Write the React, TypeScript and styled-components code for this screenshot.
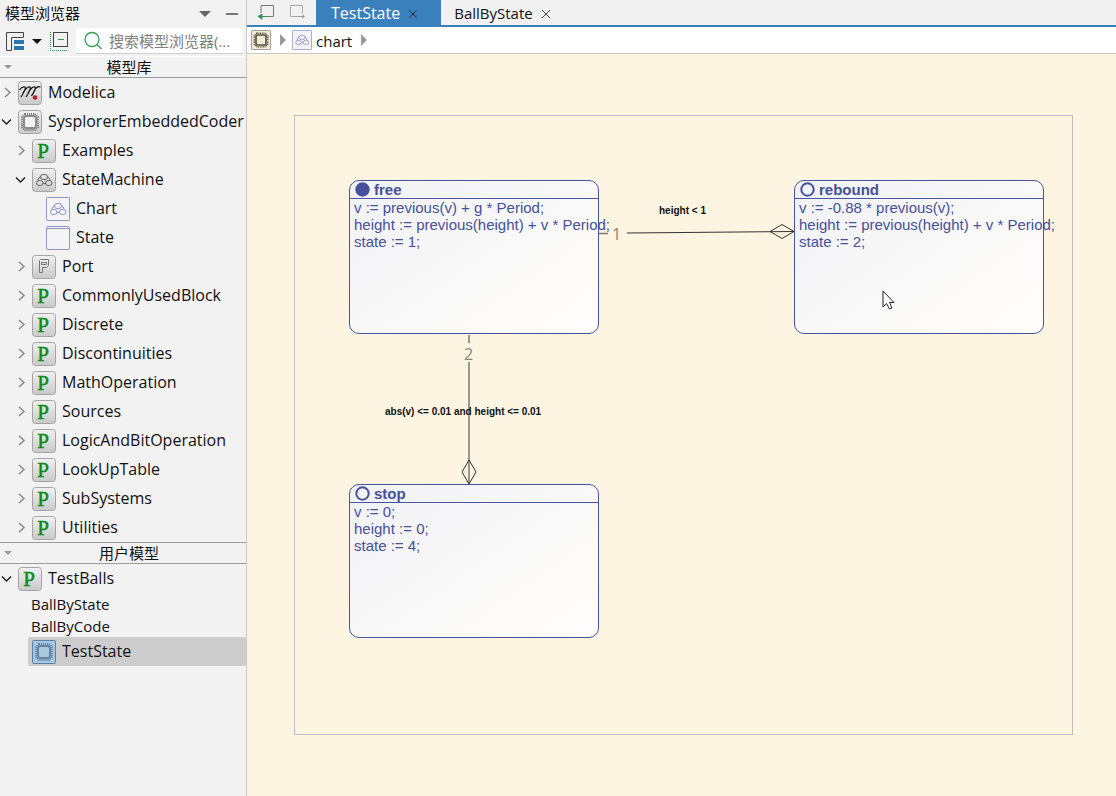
import React from "react";
import styled, { createGlobalStyle } from "styled-components";

const uiFont = `"Open Sans", "Noto Sans CJK SC", sans-serif`;

const GlobalStyle = createGlobalStyle`
  * { box-sizing: border-box; }
  html, body, #root { height: 100%; }
  body { margin: 0; font: 15px/20px ${uiFont}; color: #111; background: #f2f2f2; }
  button { font: inherit; color: inherit; background: none; border: 0; padding: 0; display: flex; align-items: center; }
  svg { display: block; flex: none; }
  ul { list-style: none; margin: 0; padding: 0; }
`;

const Shell = styled.div`
  display: grid;
  grid-template-columns: 247px minmax(0, 1fr);
  min-height: 100vh;
`;

const Sidebar = styled.aside`
  background: #f2f2f2;
  border-right: 1px solid #c9c9c9;
  min-width: 0;
`;

const PanelHeader = styled.header`
  display: flex;
  align-items: center;
  height: 27px;
  padding: 0 8px 0 5px;
  gap: 15px;
`;

const PanelTitle = styled.h1`
  flex: 1;
  margin: 0;
  padding-bottom: 2px;
  font-size: 15px;
  font-weight: 400;
  line-height: 20px;
`;

const Tools = styled.div`
  display: flex;
  align-items: center;
  height: 28px;
  margin-bottom: 1px;
  padding-left: 6px;
`;

const ToolButton = styled.button<{ $gap: number }>`
  margin-right: ${(p) => p.$gap}px;
`;

const SearchBox = styled.label`
  display: flex;
  align-items: center;
  flex: 1;
  min-width: 0;
  height: 26px;
  gap: 6px;
  padding-left: 7px;
  margin-right: 3px;
  background: #fff;
  border-bottom: 1px solid #d0d0d0;
`;

const SearchInput = styled.input`
  flex: 1;
  min-width: 0;
  border: 0;
  outline: 0;
  padding: 0;
  background: transparent;
  font: 15px/20px ${uiFont};
  &::placeholder { color: #808080; opacity: 1; }
`;

const SectionButton = styled.button`
  width: 100%;
  height: 22px;
  padding: 0 0 0 4px;
  border-top: 1px solid #fff;
  border-bottom: 1px solid #9c9c9c;
`;

const UserSectionButton = styled(SectionButton)`
  border-top-color: #9c9c9c;
`;

const SectionLabel = styled.span`
  flex: 1;
  text-align: center;
  line-height: 20px;
`;

const Row = styled.li<{ $depth: number }>`
  display: flex;
  align-items: center;
  height: 29px;
  padding-left: ${(p) => p.$depth * 14}px;
  white-space: nowrap;
`;

const PlainRow = styled.li`
  height: 22px;
  padding-left: 31px;
  font-size: 15px;
  line-height: 22px;
`;

const SelectedRow = styled.li`
  display: flex;
  align-items: center;
  height: 29px;
  margin-left: 28px;
  padding-left: 4px;
  background: #cdcdcd;
  border-radius: 2px;
`;

const Twisty = styled.button`
  width: 18px;
  height: 20px;
  flex: none;
  padding-left: 1px;
`;

const NodeLabel = styled.span`
  margin-left: 6px;
  padding-bottom: 2px;
  font-size: 16px;
  line-height: 20px;
`;

const Main = styled.main`
  display: flex;
  flex-direction: column;
  min-width: 0;
`;

const TabBar = styled.nav`
  display: flex;
  height: 27px;
  background: #f1f1f1;
  border-bottom: 2px solid #3a80bd;
`;

const History = styled.div`
  display: flex;
  gap: 14px;
  width: 69px;
  padding: 0 0 1px 11px;
`;

const Tab = styled.div<{ $active?: boolean }>`
  display: flex;
  align-items: center;
  gap: 8px;
  height: 27px;
  padding: 0 ${(p) => (p.$active ? 23 : 12)}px 0 ${(p) => (p.$active ? 15 : 13)}px;
  color: ${(p) => (p.$active ? "#fff" : "#111")};
  background: ${(p) => (p.$active ? "#3a80bd" : "transparent")};
  font-size: ${(p) => (p.$active ? 16 : 15)}px;
`;

const TabLabel = styled.button`
  padding-bottom: 2px;
`;

const Breadcrumb = styled.nav`
  display: flex;
  align-items: center;
  height: 27px;
  padding-left: 4px;
  background: #fff;
  border-bottom: 1px solid #c8c8c8;
`;

const CrumbLink = styled.a`
  display: flex;
  align-items: center;
  gap: 4px;
  color: inherit;
  text-decoration: none;
`;

const CrumbText = styled.span`
  padding-top: 2px;
`;

const Arrow = styled.span`
  padding: 0 6px 0 9px;
`;

const Workspace = styled.section`
  flex: 1;
  padding: 61px 43px 61px 47px;
  background: #fdf4e1;
`;

const Canvas = styled.div`
  position: relative;
  min-height: 620px;
  height: 100%;
  border: 1px solid #bdbdc0;
`;

const StateBox = styled.article<{ $x: number; $y: number }>`
  position: absolute;
  left: ${(p) => p.$x}px;
  top: ${(p) => p.$y}px;
  width: 250px;
  height: 154px;
  border: 1px solid #4a539f;
  border-radius: 10px;
  background: linear-gradient(145deg, #f1f2f5, #fffefb);
  color: #46509b;
  font-family: "Liberation Sans", sans-serif;
`;

const StateHead = styled.h2`
  display: flex;
  align-items: center;
  gap: 4px;
  height: 18px;
  margin: 0;
  padding-left: 5px;
  border-bottom: 1px solid #4a539f;
  font: bold 15px/17px "Liberation Sans", sans-serif;
`;

const Code = styled.div`
  padding-left: 4px;
  font-size: 15px;
  line-height: 17px;
  white-space: nowrap;
`;

const Wires = styled.svg`
  position: absolute;
  left: 0;
  top: 0;
  overflow: visible;
`;

const Condition = styled.span<{ $x: number; $y: number }>`
  position: absolute;
  left: ${(p) => p.$x}px;
  top: ${(p) => p.$y}px;
  color: #111;
  font: bold 10px/12px "Liberation Sans", sans-serif;
  white-space: nowrap;
`;

const Priority = styled.span<{ $x: number; $y: number }>`
  position: absolute;
  left: ${(p) => p.$x}px;
  top: ${(p) => p.$y}px;
  color: #8a8578;
  font: 16px/18px ${uiFont};
`;

const Pointer = styled.svg`
  position: absolute;
  left: 587px;
  top: 174px;
`;

const Caret = ({ w = 10, color = "#666" }: { w?: number; color?: string }) => (
  <svg width={w} height={w / 2} viewBox="0 0 10 5"><path d="M0 0H10L5 5Z" fill={color} /></svg>
);

const Cross = ({ color }: { color: string }) => (
  <svg width="10" height="10" viewBox="0 0 10 10"><path d="M1 1L9 9M9 1L1 9" stroke={color} strokeWidth="1" /></svg>
);

const Chevron = ({ open }: { open?: boolean }) => (
  <svg width="12" height="12" viewBox="0 0 12 12">
    <path d={open ? "M1 3.500L5.500 8L10 3.500" : "M4 1L9 5.500L4 10"} fill="none" stroke={open ? "#222" : "#888"} strokeWidth="1.500" />
  </svg>
);

type Kind = "modelica" | "chip" | "package" | "machine" | "chart" | "state" | "port" | "chipBlue" | "chipCream";

const Clouds = ({ color }: { color: string }) => (
  <g fill="none" stroke={color}>
    <rect x="8.500" y="6.500" width="7" height="5" rx="2.500" />
    <rect x="4.500" y="12.500" width="6.500" height="5" rx="2.500" />
    <rect x="13.500" y="12.500" width="6.500" height="5" rx="2.500" />
    <path d="M8.500 8.500Q6 9.500 6 12.500M15.500 8.500Q18 9.500 18 12.500M11 15.500H13.500" />
  </g>
);

const ChipShape = ({ color, ring, fill }: { color: string; ring: string; fill: string }) => (
  <>
    <path d="M7 4H17L20 7V17L17 20H7L4 17V7Z" fill="none" stroke={color} strokeWidth="2" strokeDasharray="1 1" />
    <rect x="6" y="6" width="12" height="12" rx="2.500" fill={fill} stroke={ring} strokeWidth="2" />
  </>
);

const NodeIcon = ({ kind, size = 24 }: { kind: Kind; size?: number }) => {
  const outlined = kind === "chart" || kind === "state";
  const bg = outlined ? "#f4f4f7" : kind === "chipBlue" ? "#a5c8e2" : kind === "chipCream" ? "#f5ead2" : "url(#plate)";
  const edge = outlined ? "#8d94c6" : kind === "chipBlue" ? "#5d7fa3" : kind === "chipCream" ? "#888" : "#a4a4a4";
  return (
    <svg width={size} height={size} viewBox="0 0 24 24">
      <defs>
        <linearGradient id="plate" x2="0" y2="1"><stop stopColor="#f1f1f1" /><stop offset="1" stopColor="#c9c9c9" /></linearGradient>
      </defs>
      <rect x=".5" y=".5" width="23" height="23" rx={outlined || kind === "chipBlue" || kind === "chipCream" ? 1 : 3} fill={bg} stroke={edge} />
      {kind === "package" && <text x="11" y="19" textAnchor="middle" fontFamily="Liberation Serif, serif" fontSize="21" fill="#0b8a12" stroke="#0b8a12" strokeWidth=".5">P</text>}
      {kind === "modelica" && (
        <>
          <path d="M1.500 9Q4 5 7 6Q8.500 7.500 3 16M5 12Q9 5 12 6Q13.500 7.500 8 16M10 12Q14 5 17 6Q18.500 7 13.500 15M16 10Q19 4.500 22.500 6" fill="none" stroke="#111" strokeWidth="1.300" />
          <circle cx="17" cy="16.500" r="2.300" fill="#c7161d" />
        </>
      )}
      {kind === "chip" && <ChipShape color="#777" ring="#8c8c8c" fill="#f4f4f4" />}
      {kind === "chipBlue" && <ChipShape color="#5f7f9f" ring="#6785a3" fill="#a9c9df" />}
      {kind === "chipCream" && <ChipShape color="#444" ring="#5c574c" fill="#f5ead2" />}
      {kind === "machine" && <Clouds color="#666" />}
      {kind === "chart" && <Clouds color="#8d94c6" />}
      {kind === "state" && <path d="M1 2.500H23" stroke="#8d94c6" />}
      {kind === "port" && <path d="M7.500 5.500V17.500H10.500V12.500H14.500L16.500 10.500V4.500H8.500ZM9.500 7.500H14.500V9.500H9.500Z" fill="none" stroke="#777" />}
    </svg>
  );
};

type Item = { label: string; kind: Kind; depth: number; open?: boolean; leaf?: boolean };
const pkg = (label: string): Item => ({ label, kind: "package", depth: 1 });
const library: Item[] = [
  { label: "Modelica", kind: "modelica", depth: 0 },
  { label: "SysplorerEmbeddedCoder", kind: "chip", depth: 0, open: true },
  pkg("Examples"),
  { label: "StateMachine", kind: "machine", depth: 1, open: true },
  { label: "Chart", kind: "chart", depth: 2, leaf: true },
  { label: "State", kind: "state", depth: 2, leaf: true },
  { label: "Port", kind: "port", depth: 1 },
  ...["CommonlyUsedBlock", "Discrete", "Discontinuities", "MathOperation", "Sources", "LogicAndBitOperation", "LookUpTable", "SubSystems", "Utilities"].map(pkg),
];

const Spacer = styled.span`
  width: 18px;
  flex: none;
`;

const TreeRow = ({ item }: { item: Item }) => (
  <Row $depth={item.depth}>
    {item.leaf ? <Spacer /> : <Twisty aria-label={`Toggle ${item.label}`} aria-expanded={!!item.open}><Chevron open={item.open} /></Twisty>}
    <NodeIcon kind={item.kind} />
    <NodeLabel>{item.label}</NodeLabel>
  </Row>
);

const CrumbArrow = () => (
  <Arrow><svg width="6" height="12"><path d="M0 0L6 6L0 12Z" fill="#999" /></svg></Arrow>
);

const states = [
  { name: "free", x: 54, y: 64, initial: true, lines: ["v := previous(v) + g * Period;", "height := previous(height) + v * Period;", "state := 1;"] },
  { name: "rebound", x: 499, y: 64, lines: ["v := -0.88 * previous(v);", "height := previous(height) + v * Period;", "state := 2;"] },
  { name: "stop", x: 54, y: 368, lines: ["v := 0;", "height := 0;", "state := 4;"] },
];

export default function App() {
  return (
    <Shell>
      <GlobalStyle />
      <Sidebar>
        <PanelHeader>
          <PanelTitle>模型浏览器</PanelTitle>
          <button aria-label="Panel menu"><Caret w={12} /></button>
          <button aria-label="Minimize"><svg width="12" height="2"><path d="M0 1H12" stroke="#777" strokeWidth="2" /></svg></button>
        </PanelHeader>
        <Tools>
          <ToolButton $gap={8} aria-label="View layout"><svg width="18" height="19"><path d="M17.500 5V.5H.5V18.500H5.500V5.500H17.500" fill="none" stroke="#444" /><path d="M8 8H18V12H8ZM8 14H18V18H8Z" fill="#2478ae" /></svg></ToolButton>
          <ToolButton $gap={8} aria-label="Layout options"><Caret color="#111" /></ToolButton>
          <ToolButton $gap={8} aria-label="Collapse all"><svg width="18" height="19"><rect x="3.500" y=".5" width="14" height="14" fill="none" stroke="#444" /><path d="M8 7.500H14" stroke="#2c9b4b" /><path d="M.5 0V18.500H18" fill="none" stroke="#2c9b4b" strokeDasharray="1 1" /></svg></ToolButton>
          <SearchBox>
            <svg width="20" height="20"><circle cx="9" cy="8.500" r="7" fill="none" stroke="#339b56" strokeWidth="1.300" /><path d="M14 13.500L18.500 18" stroke="#339b56" strokeWidth="1.300" /></svg>
            <SearchInput aria-label="搜索模型浏览器" placeholder="搜索模型浏览器(..." />
          </SearchBox>
        </Tools>
        <SectionButton><Caret w={8} color="#999" /><SectionLabel>模型库</SectionLabel></SectionButton>
        <ul>{library.map((item) => <TreeRow key={item.label} item={item} />)}</ul>
        <UserSectionButton><Caret w={8} color="#999" /><SectionLabel>用户模型</SectionLabel></UserSectionButton>
        <ul>
          <TreeRow item={{ label: "TestBalls", kind: "package", depth: 0, open: true }} />
          <PlainRow>BallByState</PlainRow>
          <PlainRow>BallByCode</PlainRow>
          <SelectedRow><NodeIcon kind="chipBlue" /><NodeLabel>TestState</NodeLabel></SelectedRow>
        </ul>
      </Sidebar>
      <Main>
        <TabBar>
          <History>
            <button aria-label="Back"><svg width="17" height="16"><path d="M3 9V1.500H15.500V12.500H8" fill="none" stroke="#777" /><path d="M0 12.500L4 10V15ZM4 12.500H8" fill="#2c9b4b" stroke="#2c9b4b" /></svg></button>
            <button aria-label="Forward"><svg width="17" height="16"><path d="M10 12.500H1.500V1.500H13.500V9" fill="none" stroke="#aaa" /><path d="M9 12.500H15M13 10.500L15.500 12.500L13 14.500" fill="none" stroke="#999" /></svg></button>
          </History>
          <Tab $active><TabLabel>TestState</TabLabel><button aria-label="Close TestState"><Cross color="#172c42" /></button></Tab>
          <Tab><TabLabel>BallByState</TabLabel><button aria-label="Close BallByState"><Cross color="#444" /></button></Tab>
        </TabBar>
        <Breadcrumb>
          <CrumbLink href="#model" aria-label="TestState"><NodeIcon kind="chipCream" size={20} /></CrumbLink>
          <CrumbArrow />
          <CrumbLink href="#chart"><NodeIcon kind="chart" size={20} /><CrumbText>chart</CrumbText></CrumbLink>
          <CrumbArrow />
        </Breadcrumb>
        <Workspace>
          <Canvas>
            {states.map((s) => (
              <StateBox key={s.name} $x={s.x} $y={s.y}>
                <StateHead><svg width="15" height="15"><circle cx="7.500" cy="7.500" r="6.200" fill={s.initial ? "#46509b" : "none"} stroke="#46509b" strokeWidth="2" /></svg>{s.name}</StateHead>
                <Code>{s.lines.map((l) => <div key={l}>{l}</div>)}</Code>
              </StateBox>
            ))}
            <Wires width="778" height="618" fill="none" stroke="#333">
              <path d="M304 117.500H313M174 219V227M174 246V368" stroke="#777" strokeWidth="1.500" />
              <path d="M332 117L499 115.500M475 115.500L487 108.500L499 115.500L487 122.500ZM174 344L181 356L174 368L167 356Z" />
            </Wires>
            <Priority $x={317} $y={109}>1</Priority>
            <Priority $x={169} $y={229}>2</Priority>
            <Condition $x={364} $y={89}>height &lt; 1</Condition>
            <Condition $x={90} $y={290}>abs(v) &lt;= 0.01 and height &lt;= 0.01</Condition>
            <Pointer width="13" height="20"><path d="M1 1V17L4.500 13.500L7.500 19L10 18L7.500 12.500H12Z" fill="#fff" stroke="#222" /></Pointer>
          </Canvas>
        </Workspace>
      </Main>
    </Shell>
  );
}
